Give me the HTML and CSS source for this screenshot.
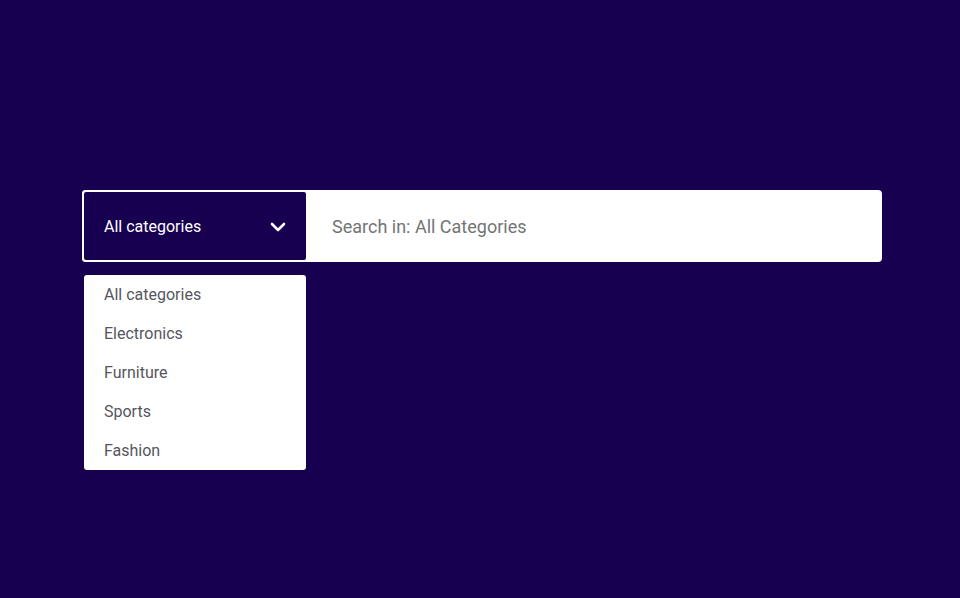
FILE: index.html
```html
<!DOCTYPE html>
<html>
<head>
<meta charset="utf-8">
<link rel="stylesheet" href="styles.css">
</head>
<body>
<div class="wrap">
  <div class="bar">
    <div class="select">
      <span class="select-label">All categories</span>
      <svg class="chev" width="16" height="10" viewBox="0 0 16 10"><path d="M2 2l6 6 6-6" fill="none" stroke="#fff" stroke-width="2.6" stroke-linecap="round" stroke-linejoin="round"/></svg>
    </div>
    <div class="search">Search in: All Categories</div>
  </div>
  <ul class="menu">
    <li>All categories</li>
    <li>Electronics</li>
    <li>Furniture</li>
    <li>Sports</li>
    <li>Fashion</li>
  </ul>
</div>
</body>
</html>
```
FILE: styles.css
```css
html, body {
  margin: 0;
  padding: 0;
  background: #170050;
  font-family: Roboto, "Liberation Sans", sans-serif;
}
.wrap {
  padding: 190px 0 0 82px;
}
.bar {
  width: 800px;
  height: 72px;
  background: #fff;
  border-radius: 4px;
  display: flex;
}
.select {
  box-sizing: border-box;
  width: 226px;
  height: 72px;
  background: #170050;
  border: 2px solid #fff;
  border-radius: 4px;
  display: flex;
  align-items: center;
  justify-content: space-between;
  padding: 0 20px 0 20px;
  color: #fff;
  font-size: 16px;
}
.chev {
  display: block;
  margin-top: 2px;
}
.search {
  display: flex;
  align-items: center;
  padding-left: 24px;
  font-size: 18px;
  color: #747474;
}
.menu {
  list-style: none;
  margin: 13px 0 0 2px;
  padding: 0;
  width: 222px;
  background: #fff;
  border-radius: 3px;
}
.menu li {
  height: 39px;
  line-height: 39px;
  padding-left: 20px;
  font-size: 16px;
  color: #55565e;
}
```
